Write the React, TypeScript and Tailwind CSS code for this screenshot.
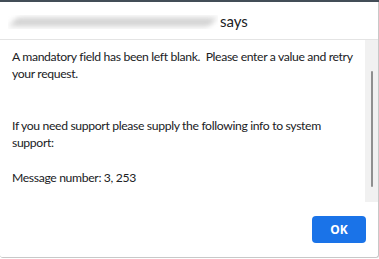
import React from 'react'

const font = { fontFamily: 'Lato, "Noto Sans", Arial, sans-serif' }

// Blurred-out site origin in the alert title
const RedactedOrigin = () => (
  <div className="relative h-[14px] w-[210px] overflow-hidden">
    <div className="absolute inset-x-1 top-[3px] h-[8px] -skew-x-[30deg] rounded-full bg-[#cdcdcd] blur-[3px]" />
  </div>
)

export default function App() {
  return (
    <div className="h-[259px] w-[379px] bg-white text-[#202124]" style={font}>
      <div className="h-[2px] bg-[#434d57]" />
      <div className="flex h-[256px] flex-col border-b border-r border-[#c8c8c8] rounded-b-[3px]">
        <div className="flex h-[38px] items-center border-b border-[#e4e4e4] pl-2 pt-[2px]">
          <RedactedOrigin />
          <span className="ml-[2px] text-[15px] leading-none">says</span>
        </div>
        <div className="flex h-[162px]">
          <div className="flex-1 pl-3 pr-3 pt-[8px] text-[12.2px] leading-[17.3px] tracking-[-0.35px]">
            <p>A mandatory field has been left blank.&nbsp; Please enter a value and retry your request.</p>
            <p className="mt-[34.6px]">If you need support please supply the following info to system support:</p>
            <p className="mt-[17.3px]">Message number: 3, 253</p>
          </div>
          <div className="flex w-[13px] justify-center bg-[#f1f1f1] pt-[31px]">
            <div className="h-[116px] w-[2px] rounded-full bg-[#8f8f8f]" />
          </div>
        </div>
        <div className="flex flex-1 items-start justify-end pr-3 pt-[14px]">
          <button className="h-[27px] w-[54px] rounded-[4px] bg-[#1a73e8] text-[12px] font-bold text-white" style={{ fontFamily: '"Noto Sans", Arial, sans-serif' }}>
            OK
          </button>
        </div>
      </div>
    </div>
  )
}
